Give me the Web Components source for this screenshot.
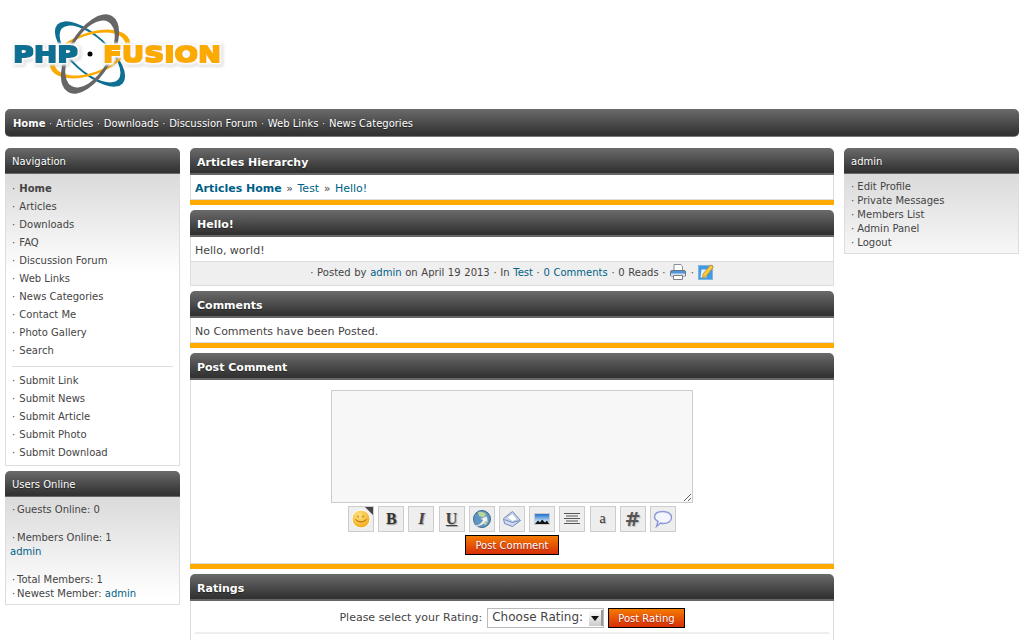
<!DOCTYPE html>
<html>
<head>
<meta charset="utf-8">
<title>PHP-Fusion</title>
<style>
    html { overflow: hidden; }
    body {
        margin: 0;
        padding: 0 5px;
        background: #fff;
        color: #444;
        font: 11px/14px "DejaVu Sans", Verdana, sans-serif;
    }
    pf-columns a { color: #005f87; text-decoration: none; }
</style>
</head>
<body>
<pf-logo></pf-logo>
<pf-menu>
    <b>Home</b><pf-sep></pf-sep>Articles<pf-sep></pf-sep>Downloads<pf-sep></pf-sep>Discussion Forum<pf-sep></pf-sep>Web Links<pf-sep></pf-sep>News Categories
</pf-menu>
<pf-columns>
    <div slot="left">
        <pf-side-panel heading="Navigation" style="--pad: 6px 6px 3px">
            <pf-nav-item bold>Home</pf-nav-item>
            <pf-nav-item>Articles</pf-nav-item>
            <pf-nav-item>Downloads</pf-nav-item>
            <pf-nav-item>FAQ</pf-nav-item>
            <pf-nav-item>Discussion Forum</pf-nav-item>
            <pf-nav-item>Web Links</pf-nav-item>
            <pf-nav-item>News Categories</pf-nav-item>
            <pf-nav-item>Contact Me</pf-nav-item>
            <pf-nav-item>Photo Gallery</pf-nav-item>
            <pf-nav-item>Search</pf-nav-item>
            <pf-nav-divider></pf-nav-divider>
            <pf-nav-item>Submit Link</pf-nav-item>
            <pf-nav-item>Submit News</pf-nav-item>
            <pf-nav-item>Submit Article</pf-nav-item>
            <pf-nav-item>Submit Photo</pf-nav-item>
            <pf-nav-item>Submit Download</pf-nav-item>
        </pf-side-panel>
        <pf-side-panel heading="Users Online" style="--pad: 6px 4px 3px; margin-top: -1px">
            <div><pf-bullet></pf-bullet>Guests Online: 0</div>
            <br>
            <div><pf-bullet></pf-bullet>Members Online: 1</div>
            <div><a>admin</a></div>
            <br>
            <div><pf-bullet></pf-bullet>Total Members: 1</div>
            <div><pf-bullet></pf-bullet>Newest Member: <a>admin</a></div>
        </pf-side-panel>
    </div>

    <pf-center-panel heading="Articles Hierarchy" capped>
        <pf-crumbs><b>Articles Home</b><i>»</i>Test<i>»</i>Hello!</pf-crumbs>
    </pf-center-panel>
    <pf-center-panel heading="Hello!">
        <div>Hello, world!</div>
        <pf-news-footer slot="footer"></pf-news-footer>
    </pf-center-panel>
    <pf-center-panel heading="Comments" capped>
        <div>No Comments have been Posted.</div>
    </pf-center-panel>
    <pf-center-panel heading="Post Comment" capped>
        <pf-comment-form></pf-comment-form>
    </pf-center-panel>
    <pf-center-panel heading="Ratings">
        <pf-rating-form></pf-rating-form>
    </pf-center-panel>

    <div slot="right">
        <pf-side-panel heading="admin" style="--pad: 6px 6px 3px">
            <div>· Edit Profile</div>
            <div>· Private Messages</div>
            <div>· Members List</div>
            <div>· Admin Panel</div>
            <div>· Logout</div>
        </pf-side-panel>
    </div>
</pf-columns>

<script>
const BAR_GRADIENT = 'linear-gradient(#6b6b6b, #333 92%)'

// ring of an orbit: outer ellipse minus inner one, same centre
function ring(rx, ry, ix, iy) {
    const e = (a, b) => `M${90 - a} 54a${a} ${b} 0 1 0 ${a * 2} 0a${a} ${b} 0 1 0 ${-a * 2} 0z`
    return e(rx, ry) + e(ix, iy)
}

class PfElement extends HTMLElement {
    constructor() {
        super()
        this.attachShadow({ mode: 'open' })
        this.shadowRoot.innerHTML = this.render()
    }
}

class PfLogo extends PfElement {
    render() {
        return `
            <style>
                :host { display: block; height: 109px; }
                svg { display: block; }
                text { font-family: "DejaVu Sans", sans-serif; font-weight: bold; font-size: 22px; }
            </style>
            <svg width="230" height="100" viewBox="5 0 230 100">
                <defs>
                    <filter id="halo" x="-10%" y="-40%" width="120%" height="180%">
                        <feMorphology in="SourceAlpha" operator="dilate" radius="3.2" result="fat"/>
                        <feGaussianBlur in="fat" stdDeviation="0.8" result="soft"/>
                        <feFlood flood-color="#fff"/>
                        <feComposite in2="soft" operator="in" result="white"/>
                        <feOffset in="soft" dx="1" dy="1" result="off"/>
                        <feGaussianBlur in="off" stdDeviation="1.2" result="offb"/>
                        <feFlood flood-color="#999" flood-opacity=".6"/>
                        <feComposite in2="offb" operator="in" result="shade"/>
                        <feMorphology in="SourceGraphic" operator="dilate" radius="0.7" result="bold"/>
                        <feMerge>
                            <feMergeNode in="shade"/>
                            <feMergeNode in="white"/>
                            <feMergeNode in="bold"/>
                        </feMerge>
                    </filter>
                </defs>
                <g fill-rule="evenodd">
                    <path transform="rotate(42 90 54)" fill="#0f6f93" d="${ring(44, 19, 38, 17)}"/>
                    <path transform="rotate(-20 90 54)" fill="#fbaa00" d="${ring(42, 21, 37, 18.5)}"/>
                    <path transform="rotate(-60 90 54)" fill="#666" d="${ring(44, 22, 37, 19)}"/>
                </g>
                <g filter="url(#halo)">
                    <text x="13" y="61.5" fill="#0f6f93" textLength="65" lengthAdjust="spacingAndGlyphs">PHP</text>
                    <text x="103" y="61.5" fill="#fbaa00" textLength="118" lengthAdjust="spacingAndGlyphs">FUSION</text>
                </g>
                <circle cx="90" cy="54" r="3.5" fill="#000" stroke="#fff" stroke-width="2"/>
            </svg>
        `
    }
}

class PfSep extends PfElement {
    render() {
        return `
            <style>:host { display: inline-block; width: 10.5px; text-align: center; opacity: .8; }</style>·
        `
    }
}

class PfBullet extends PfElement {
    render() {
        return `
            <style>:host { display: inline-block; width: 7px; text-align: center; }</style>·
        `
    }
}

class PfMenu extends PfElement {
    render() {
        return `
            <style>
                :host {
                    display: block;
                    height: 28px;
                    box-sizing: border-box;
                    padding: 1px 8px 0;
                    margin-bottom: 11px;
                    font-size: 10px;
                    line-height: 27px;
                    white-space: nowrap;
                    color: #fff;
                    border-radius: 5px;
                    border-bottom: 1px solid #777;
                    background: ${BAR_GRADIENT};
                    text-shadow: 0 1px 1px #222;
                }
            </style>
            <slot></slot>
        `
    }
}

class PfColumns extends PfElement {
    render() {
        return `
            <style>
                :host {
                    display: grid;
                    grid-template-columns: 175px 644px 175px;
                    column-gap: 10px;
                    align-items: start;
                }
                .center { display: flex; flex-direction: column; }
            </style>
            <slot name="left"></slot>
            <div class="center"><slot></slot></div>
            <slot name="right"></slot>
        `
    }
}

class PfSidePanel extends PfElement {
    render() {
        return `
            <style>
                :host { display: block; margin-bottom: 6px; font-size: 10px; }
                .head {
                    height: 26px;
                    box-sizing: border-box;
                    padding: 2px 7px 0;
                    line-height: 24px;
                    color: #fff;
                    border-radius: 5px 5px 0 0;
                    border-bottom: 1px solid #666;
                    background: ${BAR_GRADIENT};
                    text-shadow: 0 1px 1px #222;
                }
                .body {
                    padding: var(--pad, 6px);
                    border: 1px solid #ddd;
                    border-top: 0;
                    background: linear-gradient(#dadada, #fff 100px);
                }
            </style>
            <div class="head">${this.getAttribute('heading')}</div>
            <div class="body"><slot></slot></div>
        `
    }
}

class PfNavItem extends PfElement {
    render() {
        const weight = this.hasAttribute('bold') ? 'bold' : 'normal'
        return `
            <style>
                :host { display: block; height: 18px; line-height: 18px; color: #444; white-space: nowrap; }
                span { font-weight: ${weight}; margin-left: 1px; }
            </style>
            · <span><slot></slot></span>
        `
    }
}

class PfNavDivider extends PfElement {
    render() {
        return `
            <style>
                :host { display: block; height: 1px; margin: 6px 0 5px; background: #ddd; }
            </style>
        `
    }
}

class PfCenterPanel extends PfElement {
    render() {
        const cap = this.hasAttribute('capped') ? 'block' : 'none'
        return `
            <style>
                :host { display: block; margin-bottom: 5px; }
                .head {
                    height: 27px;
                    box-sizing: border-box;
                    padding: 2px 7px 0;
                    line-height: 25px;
                    font-size: 11px;
                    font-weight: bold;
                    color: #fff;
                    border-radius: 5px 5px 0 0;
                    border-bottom: 2px solid #666;
                    background: ${BAR_GRADIENT};
                    text-shadow: 0 1px 1px #222;
                }
                .body {
                    padding: 6px 4px 3px;
                    border: 1px solid #ddd;
                    border-top: 0;
                    line-height: 15px;
                    background: #fff;
                }
                .cap { display: ${cap}; height: 5px; background: #fa0; }
            </style>
            <div class="head">${this.getAttribute('heading')}</div>
            <div class="body"><slot></slot></div>
            <slot name="footer"></slot>
            <div class="cap"></div>
        `
    }
}

class PfCrumbs extends PfElement {
    render() {
        return `
            <style>
                :host { display: block; color: #005f87; }
                ::slotted(i) { font-style: normal; color: #444; margin: 0 4.5px; }
            </style>
            <slot></slot>
        `
    }
}

class PfNewsFooter extends PfElement {
    render() {
        return `
            <style>
                :host {
                    display: block;
                    box-sizing: border-box;
                    height: 24px;
                    font-size: 10px;
                    word-spacing: .5px;
                    line-height: 21px;
                    text-align: center;
                    background: #efefef;
                    border: 1px solid #ddd;
                    border-top: 0;
                    white-space: nowrap;
                }
                a { color: #005f87; }
                svg { vertical-align: middle; margin-top: -2px; }
            </style>
            · Posted by <a>admin</a> on April 19 2013 · In <a>Test</a> · <a>0 Comments</a> · 0 Reads ·
            <svg width="18" height="18" viewBox="0 0 18 18">
                <path d="M5 1.5h7l1.500 2v4h-8.500z" fill="#fff" stroke="#8a8f96"/>
                <rect x="1.5" y="7.5" width="15" height="6" rx="1.5" fill="#4f97dc" stroke="#6a7380"/>
                <rect x="2" y="10.5" width="14" height="3" fill="#d8dde3"/>
                <path d="M4.5 12.5h9v4h-9z" fill="#fff" stroke="#7a8088"/>
            </svg>
            ·
            <svg width="16" height="16" viewBox="0 0 16 16">
                <rect x=".5" y="1.5" width="14" height="14" fill="#3f9be6" stroke="#7fb4dd"/>
                <path d="M2.5 13.5l1-8h6l-1 8z" fill="#e6f3fc"/>
                <path d="M5 10L12.5 .8l3 2.2L8 12.5l-3.5 1.2z" fill="#f9c93d" stroke="#b9801c" stroke-width=".7"/>
            </svg>
        `
    }
}

class PfBbButton extends PfElement {
    render() {
        return `
            <style>
                :host {
                    display: flex;
                    align-items: center;
                    justify-content: center;
                    position: relative;
                    width: 26px;
                    height: 26px;
                    box-sizing: border-box;
                    background: #eee;
                    border: 1px solid #ccc;
                    color: #333;
                }
            </style>
            <slot></slot>
        `
    }
}

class PfOrangeButton extends PfElement {
    render() {
        return `
            <style>
                :host {
                    display: inline-block;
                    box-sizing: border-box;
                    height: 20px;
                    padding: 0 9px;
                    line-height: 19px;
                    font-size: 10px;
                    color: #fff;
                    border: 1px solid #000;
                    background: linear-gradient(#f47b00, #d82f08);
                    text-shadow: 0 1px 1px #922;
                    white-space: nowrap;
                }
            </style>
            <slot></slot>
        `
    }
}

class PfCommentForm extends PfElement {
    render() {
        return `
            <style>
                :host { display: block; margin-top: 4px; padding-bottom: 5px; }
                .form { display: flex; flex-direction: column; align-items: center; }
                textarea {
                    display: block;
                    width: 362px;
                    height: 113px;
                    box-sizing: border-box;
                    margin: 0;
                    background: #f7f7f7;
                    border: 1px solid #ccc;
                }
                .tools { display: flex; gap: 4.2px; margin: 3px 0; }
                .b { font: bold 16px "Liberation Serif", serif; text-shadow: 1px 1px 1px #999; }
                .i { font: italic bold 17px "Liberation Serif", serif; color: #444; text-shadow: 1px 1px 1px #aaa; }
                .u { font: bold 16px "Liberation Serif", serif; color: #444; text-decoration: underline; text-shadow: 1px 1px 1px #aaa; }
                .a { font: 14px "Liberation Serif", serif; text-shadow: 1px 1px 1px #bbb; }
                .h { font: bold 19px "DejaVu Sans", sans-serif; color: #555; text-shadow: 1px 1px 1px #bbb; }
                .corner { position: absolute; top: 0; right: 0; border: 4px solid; border-color: #444 #444 transparent transparent; }
            </style>
            <div class="form">
                <textarea></textarea>
                <div class="tools">
                    <pf-bb-button>
                        <svg width="20" height="20" viewBox="0 0 20 20">
                            <defs><radialGradient id="sm" cx=".4" cy=".3" r=".8"><stop offset="0" stop-color="#ffe680"/><stop offset="1" stop-color="#f0a010"/></radialGradient></defs>
                            <circle cx="10" cy="10" r="9" fill="url(#sm)" stroke="#fff"/>
                            <path d="M7 6.5v2M12 6.5v2" stroke="#a05c00"/>
                            <path d="M4.5 10.5q5.5 5 11 0" fill="none" stroke="#b06000"/>
                        </svg>
                        <span class="corner"></span>
                    </pf-bb-button>
                    <pf-bb-button><span class="b">B</span></pf-bb-button>
                    <pf-bb-button><span class="i">I</span></pf-bb-button>
                    <pf-bb-button><span class="u">U</span></pf-bb-button>
                    <pf-bb-button>
                        <svg width="20" height="20" viewBox="0 0 20 20">
                            <circle cx="10" cy="10" r="8.5" fill="#5d95c4" stroke="#40688c"/>
                            <path d="M6 3q5-1 8 2l-2 4-5-2zM11 11l5-1-2 6-3-1z" fill="#b7d79a"/>
                            <path d="M2 15q5 3 9-4l-3-1 7-3 1 7-2-2q-4 6-10 5z" fill="#eef2f5" stroke="#7a8a99" stroke-width=".4"/>
                        </svg>
                    </pf-bb-button>
                    <pf-bb-button>
                        <svg width="20" height="20" viewBox="0 0 20 20">
                            <path d="M1.5 9.5l9-7 8 9-8 6-8-3z" fill="#cfdcf3" stroke="#6f88b4"/>
                            <path d="M4.5 8.5l6-4 5 6-5 2z" fill="#fff" stroke="#9aaccc" stroke-width=".7"/>
                            <path d="M2.5 10.5l8 3 7-2" fill="none" stroke="#6f88b4"/>
                        </svg>
                    </pf-bb-button>
                    <pf-bb-button>
                        <svg width="18" height="16" viewBox="0 0 18 16">
                            <defs><linearGradient id="sky" x2="0" y2="1"><stop offset="0" stop-color="#1f6fd0"/><stop offset=".7" stop-color="#bcdcf5"/></linearGradient></defs>
                            <rect x="1" y="2" width="16" height="12" fill="#ccc"/>
                            <rect x="2" y="3" width="14" height="10" fill="url(#sky)"/>
                            <path d="M2 13l3-3.5 2 2 2-3 3 3 2-2 2 3.5z" fill="#111"/>
                        </svg>
                    </pf-bb-button>
                    <pf-bb-button>
                        <svg width="18" height="14" viewBox="0 0 18 14">
                            <path d="M1 1.5h16M3 4h12M1 6.5h16M3 9h12M1 11.5h16" stroke="#555" stroke-width="1"/>
                        </svg>
                    </pf-bb-button>
                    <pf-bb-button><span class="a">a</span></pf-bb-button>
                    <pf-bb-button><span class="h">#</span></pf-bb-button>
                    <pf-bb-button>
                        <svg width="20" height="18" viewBox="0 0 20 18">
                            <path d="M10 1.5c5 0 8.5 2.5 8.5 6s-3.5 6-8 6c-1 0-2 0-3-.5l-4 3.5 1.5-5c-2-1-3.5-2.5-3.5-4.500 0-3.500 3.500-5.500 8.500-5.500z" fill="#f4f6ff" stroke="#8f99d8" stroke-width="1.4"/>
                        </svg>
                    </pf-bb-button>
                </div>
                <pf-orange-button>Post Comment</pf-orange-button>
            </div>
        `
    }
}

class PfRatingForm extends PfElement {
    render() {
        return `
            <style>
                :host { display: block; padding-bottom: 20px; }
                .row {
                    display: flex;
                    align-items: center;
                    justify-content: center;
                    height: 22px;
                    line-height: 22px;
                }
                .select {
                    position: relative;
                    box-sizing: border-box;
                    width: 117px;
                    height: 20px;
                    margin: 0 4px 0 5px;
                    padding-left: 4px;
                    line-height: 17px;
                    font-size: 12px;
                    white-space: nowrap;
                    border: 1px solid #bbb;
                    background: #fff;
                }
                .arrow {
                    position: absolute;
                    top: 1px;
                    right: 0;
                    width: 14px;
                    height: 16px;
                    background: linear-gradient(#fff, #ccc);
                    border-right: 2px solid #999;
                    box-sizing: border-box;
                }
                .arrow::after {
                    content: "";
                    position: absolute;
                    left: 2px;
                    top: 6px;
                    border: 4px solid transparent;
                    border-top: 5px solid #111;
                    border-bottom: 0;
                }
                hr { height: 2px; margin: 3px 0 0; border: 0; background: #eee; }
            </style>
            <div class="row">
                <span>Please select your Rating:</span>
                <span class="select">Choose Rating:<span class="arrow"></span></span>
                <pf-orange-button>Post Rating</pf-orange-button>
            </div>
            <hr>
        `
    }
}

window.customElements.define('pf-logo', PfLogo)
window.customElements.define('pf-sep', PfSep)
window.customElements.define('pf-bullet', PfBullet)
window.customElements.define('pf-menu', PfMenu)
window.customElements.define('pf-columns', PfColumns)
window.customElements.define('pf-side-panel', PfSidePanel)
window.customElements.define('pf-nav-item', PfNavItem)
window.customElements.define('pf-nav-divider', PfNavDivider)
window.customElements.define('pf-center-panel', PfCenterPanel)
window.customElements.define('pf-crumbs', PfCrumbs)
window.customElements.define('pf-news-footer', PfNewsFooter)
window.customElements.define('pf-bb-button', PfBbButton)
window.customElements.define('pf-orange-button', PfOrangeButton)
window.customElements.define('pf-comment-form', PfCommentForm)
window.customElements.define('pf-rating-form', PfRatingForm)
</script>
</body>
</html>
